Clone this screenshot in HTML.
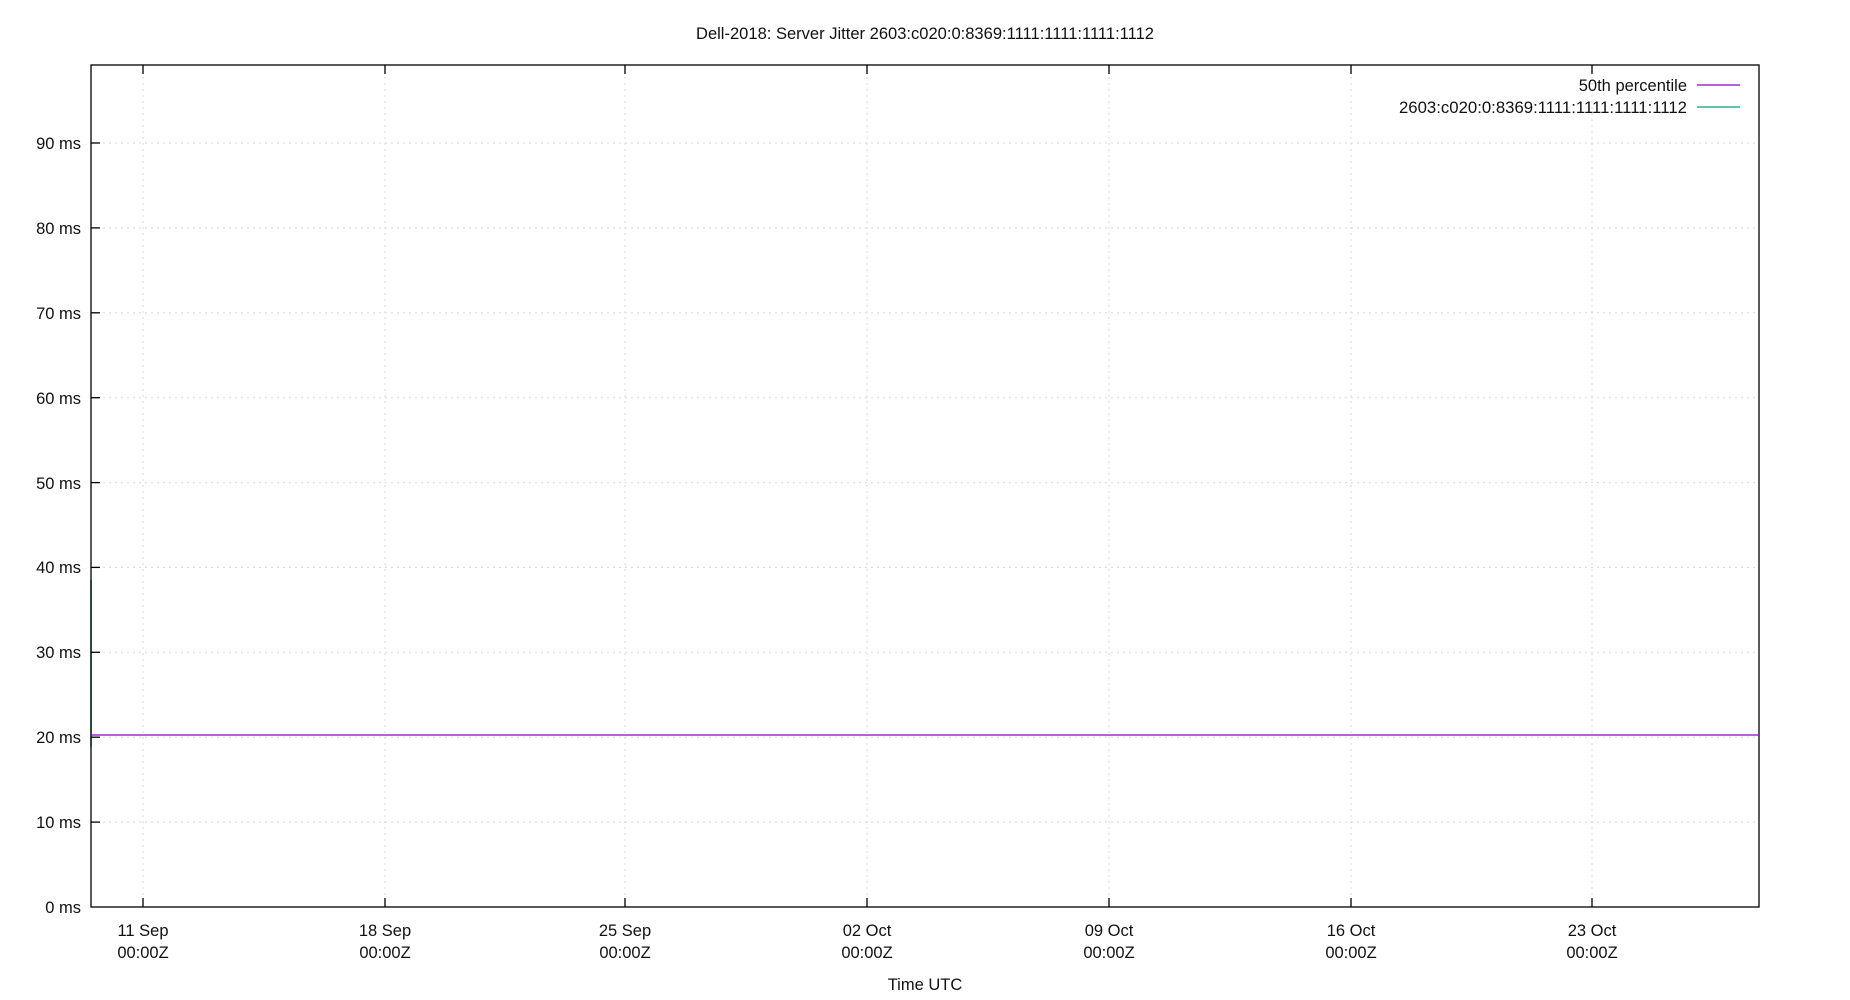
<!DOCTYPE html>
<html><head><meta charset="utf-8"><style>
html,body{margin:0;padding:0;background:#fff;}
svg{display:block;}
text{font-family:"Liberation Sans","DejaVu Sans",sans-serif;font-size:16.5px;fill:#111;}
</style></head><body>
<svg width="1850" height="1000" viewBox="0 0 1850 1000" xmlns="http://www.w3.org/2000/svg">
<rect width="1850" height="1000" fill="#fff"/>
<text x="925" y="39" text-anchor="middle" textLength="458" lengthAdjust="spacingAndGlyphs">Dell-2018: Server Jitter 2603:c020:0:8369:1111:1111:1111:1112</text>
<g stroke="#d8d8d8" stroke-width="1" stroke-dasharray="2,4">
<line x1="91" x2="1759" y1="822.1" y2="822.1"/>
<line x1="91" x2="1759" y1="737.2" y2="737.2"/>
<line x1="91" x2="1759" y1="652.3" y2="652.3"/>
<line x1="91" x2="1759" y1="567.4" y2="567.4"/>
<line x1="91" x2="1759" y1="482.6" y2="482.6"/>
<line x1="91" x2="1759" y1="397.7" y2="397.7"/>
<line x1="91" x2="1759" y1="312.8" y2="312.8"/>
<line x1="91" x2="1759" y1="227.9" y2="227.9"/>
<line x1="91" x2="1759" y1="143" y2="143"/>
<line x1="143" x2="143" y1="65" y2="907"/>
<line x1="385" x2="385" y1="65" y2="907"/>
<line x1="625" x2="625" y1="65" y2="907"/>
<line x1="867" x2="867" y1="65" y2="907"/>
<line x1="1109" x2="1109" y1="65" y2="907"/>
<line x1="1351" x2="1351" y1="65" y2="907"/>
<line x1="1592" x2="1592" y1="65" y2="907"/>
</g>
<line x1="91" x2="91" y1="580" y2="747" stroke="#009e73" stroke-width="1.5"/>
<g stroke="#000" stroke-width="1.3">
<rect x="91" y="65" width="1668" height="842" fill="none"/>
<line x1="91" x2="100" y1="822.1" y2="822.1"/><line x1="91" x2="100" y1="737.2" y2="737.2"/>
<line x1="91" x2="100" y1="652.3" y2="652.3"/><line x1="91" x2="100" y1="567.4" y2="567.4"/>
<line x1="91" x2="100" y1="482.6" y2="482.6"/><line x1="91" x2="100" y1="397.7" y2="397.7"/>
<line x1="91" x2="100" y1="312.8" y2="312.8"/><line x1="91" x2="100" y1="227.9" y2="227.9"/>
<line x1="91" x2="100" y1="143" y2="143"/>
<line x1="143" x2="143" y1="907" y2="898"/><line x1="143" x2="143" y1="65" y2="74"/>
<line x1="385" x2="385" y1="907" y2="898"/><line x1="385" x2="385" y1="65" y2="74"/>
<line x1="625" x2="625" y1="907" y2="898"/><line x1="625" x2="625" y1="65" y2="74"/>
<line x1="867" x2="867" y1="907" y2="898"/><line x1="867" x2="867" y1="65" y2="74"/>
<line x1="1109" x2="1109" y1="907" y2="898"/><line x1="1109" x2="1109" y1="65" y2="74"/>
<line x1="1351" x2="1351" y1="907" y2="898"/><line x1="1351" x2="1351" y1="65" y2="74"/>
<line x1="1592" x2="1592" y1="907" y2="898"/><line x1="1592" x2="1592" y1="65" y2="74"/>
</g>
<line x1="91" x2="1759" y1="735" y2="735" stroke="#8a00c8" stroke-width="1.3"/>
<g text-anchor="end">
<text x="81" y="913">0 ms</text><text x="81" y="828">10 ms</text><text x="81" y="743">20 ms</text>
<text x="81" y="658">30 ms</text><text x="81" y="573">40 ms</text><text x="81" y="489">50 ms</text>
<text x="81" y="404">60 ms</text><text x="81" y="319">70 ms</text><text x="81" y="234">80 ms</text>
<text x="81" y="149">90 ms</text>
</g>
<g text-anchor="middle">
<text x="143" y="936">11 Sep</text><text x="143" y="958">00:00Z</text>
<text x="385" y="936">18 Sep</text><text x="385" y="958">00:00Z</text>
<text x="625" y="936">25 Sep</text><text x="625" y="958">00:00Z</text>
<text x="867" y="936">02 Oct</text><text x="867" y="958">00:00Z</text>
<text x="1109" y="936">09 Oct</text><text x="1109" y="958">00:00Z</text>
<text x="1351" y="936">16 Oct</text><text x="1351" y="958">00:00Z</text>
<text x="1592" y="936">23 Oct</text><text x="1592" y="958">00:00Z</text>
<text x="925" y="990">Time UTC</text>
</g>
<text x="1687" y="91" text-anchor="end">50th percentile</text>
<text x="1687" y="113" text-anchor="end" textLength="288" lengthAdjust="spacingAndGlyphs">2603:c020:0:8369:1111:1111:1111:1112</text>
<line x1="1697" x2="1740" y1="85" y2="85" stroke="#8a00c8" stroke-width="1.3"/>
<line x1="1697" x2="1740" y1="107" y2="107" stroke="#009e73" stroke-width="1.3"/>
</svg>
</body></html>
